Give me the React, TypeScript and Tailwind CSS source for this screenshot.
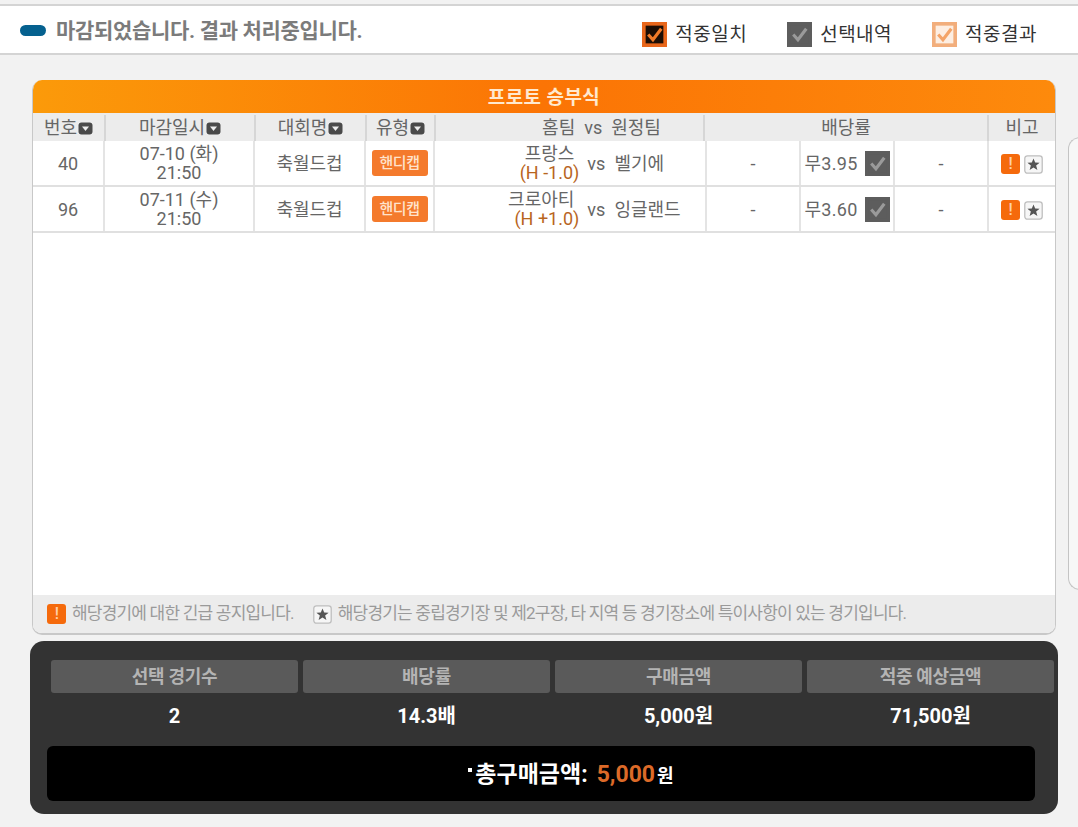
const font = { fontFamily: 'Roboto, "Noto Sans CJK KR", sans-serif' };

function Check({ stroke, fill, border, size = 25 }: { stroke: string; fill: string; border: string; size?: number }) {
  return (
    <svg width={size} height={size} viewBox="0 0 24 24" className="shrink-0">
      <rect x="0" y="0" width="24" height="24" fill={border} />
      <rect x="3.5" y="3.5" width="17" height="17" fill={fill} />
      <path d="M6 12 L10.5 17 L18.5 6.5" fill="none" stroke={stroke} strokeWidth="3" />
    </svg>
  );
}

function Sort() {
  return (
    <svg width="15" height="13" viewBox="0 0 15 13" className="shrink-0 ml-px">
      <rect x="0.5" y="0.5" width="14" height="12" rx="3" fill="#4a4a4a" />
      <path d="M4 4.5 H11 L7.5 9 Z" fill="#eeeeee" />
    </svg>
  );
}

function Bang({ size = 20 }: { size?: number }) {
  return (
    <span className="flex items-center justify-center rounded-[3px] bg-[#f56a0c] text-[#ffd0a8] font-medium text-[16px] leading-none shrink-0" style={{ width: size - 1, height: size }}>!</span>
  );
}

function Star({ size = 19 }: { size?: number }) {
  return (
    <svg width={size} height={size} viewBox="0 0 18 18" className="shrink-0">
      <rect x="0.75" y="0.75" width="16.5" height="16.5" rx="2.5" fill="#f6f6f6" stroke="#bdbdbd" strokeWidth="1.2" />
      <path d="M9 3.2 L10.6 7.1 L14.8 7.3 L11.5 10 L12.7 14.2 L9 11.9 L5.3 14.2 L6.5 10 L3.2 7.3 L7.4 7.1 Z" fill="#555555" />
    </svg>
  );
}

function Legend({ label, border, fill, stroke }: { label: string; border: string; fill: string; stroke: string }) {
  return (
    <div className="flex items-center gap-[8px]">
      <Check border={border} fill={fill} stroke={stroke} />
      <span className="text-[19px] text-[#333333] tracking-[0.5px] leading-none">{label}</span>
    </div>
  );
}

function HeadCell({ label, sort, last }: { label: string; sort?: boolean; last?: boolean }) {
  return (
    <div className={`flex items-center justify-center text-[18px] text-[#666666] leading-none ${last ? '' : 'border-r-2 border-[#d6d6d6]'}`}>
      <span>{label}</span>
      {sort && <Sort />}
    </div>
  );
}

function Row({ no, date, home, hc, away, odd }: { no: string; date: string; home: string; hc: string; away: string; odd: string }) {
  const cell = 'flex items-center justify-center border-r-2 border-[#e4e4e4] text-[#666666]';
  return (
    <div className="grid grid-cols-[72px_150px_111px_69px_272px_94px_94px_94px_66px] h-[46px] border-b-2 border-[#e0e0e0] bg-white text-[18px]">
      <div className={cell}>{no}</div>
      <div className={`${cell} flex-col leading-[19px]`}>
        <span>{date}</span>
        <span>21:50</span>
      </div>
      <div className={cell}>축월드컵</div>
      <div className={cell}>
        <span className="flex h-[26px] w-[56px] items-center justify-center rounded-[3px] bg-[#f47a2c] text-[15px] font-medium text-[#ffe3cc] tracking-[-0.5px]">핸디캡</span>
      </div>
      <div className={`${cell} pl-[2px]`}>
        <div className="w-[144px] flex flex-col items-end leading-[19px]">
          <span className="pr-[5px]">{home}</span>
          <span className="text-[#b8651e]">{hc}</span>
        </div>
        <span className="w-[127px] pl-[8px] flex items-center gap-[9px] whitespace-nowrap">
          <span>vs</span>
          <span>{away}</span>
        </span>
      </div>
      <div className={cell}>-</div>
      <div className={`${cell} gap-[7px]`}>
        <span className="tracking-[0.3px]">{odd}</span>
        <Check border="#5d5d5d" fill="#5d5d5d" stroke="#9a9a9a" />
      </div>
      <div className={cell}>-</div>
      <div className="flex items-center justify-center gap-[4px] pt-[2px]">
        <Bang />
        <Star />
      </div>
    </div>
  );
}

function Stat({ label, value }: { label: string; value: string }) {
  return (
    <div className="flex flex-col items-center">
      <div className="h-[33px] w-full rounded-[3px] bg-[#5a5a5a] flex items-center justify-center text-[18px] font-bold text-[#b4b4b4] tracking-[-0.3px]">{label}</div>
      <div className="h-[53px] flex items-center justify-center text-[20px] font-bold text-white pb-[8px]">{value}</div>
    </div>
  );
}

export default function App() {
  return (
    <div className="w-[1078px] h-[827px] overflow-hidden bg-[#f2f2f2] pt-[4px]" style={font}>
      <header className="h-[51px] bg-white border-y-2 border-y-[#d4d4d4] flex items-center pl-[20px] pr-[41px]">
        <span className="h-[11px] w-[26px] rounded-full bg-[#05618f] mt-[1px]" />
        <span className="ml-[10px] text-[21px] font-bold text-[#7b7b7b] tracking-[-0.32px] leading-none pt-[3px]">마감되었습니다. 결과 처리중입니다.</span>
        <div className="ml-auto flex items-center gap-[40px] pt-[9px]">
          <Legend label="적중일치" border="#e8661a" fill="#1c0d04" stroke="#f07a28" />
          <Legend label="선택내역" border="#5d5d5d" fill="#5d5d5d" stroke="#9a9a9a" />
          <Legend label="적중결과" border="#f2ae7c" fill="#fdeee2" stroke="#f4a468" />
        </div>
      </header>

      <main className="flex pl-[32px] pt-[25px] gap-[12px]">
        <section className="w-[1024px] h-[555px] shrink-0 rounded-[10px] border border-t-0 border-[#c8c8c8] border-b-2 bg-white overflow-hidden flex flex-col">
          <div className="h-[33px] bg-gradient-to-r from-[#fb9a0a] via-[#fb7405] to-[#fd8a0c] flex items-center justify-center text-[19px] font-bold text-[#ffe9cf] tracking-[0.4px] pt-[3px] shrink-0">프로토 승부식</div>
          <div className="grid grid-cols-[73px_150px_111px_69px_269px_284px_66px] h-[28px] bg-[#ececec] pt-[2px] shrink-0">
            <HeadCell label="번호" sort />
            <HeadCell label="마감일시" sort />
            <HeadCell label="대회명" sort />
            <HeadCell label="유형" sort />
            <div className="flex items-center justify-center gap-[9px] text-[18px] text-[#666666] leading-none border-r-2 border-[#d6d6d6] pl-[64px] whitespace-nowrap">
              <span>홈팀</span><span>vs</span><span>원정팀</span>
            </div>
            <HeadCell label="배당률" />
            <HeadCell label="비고" last />
          </div>
          <Row no="40" date="07-10 (화)" home="프랑스" hc="(H -1.0)" away="벨기에" odd="무3.95" />
          <Row no="96" date="07-11 (수)" home="크로아티" hc="(H +1.0)" away="잉글랜드" odd="무3.60" />
          <div className="flex-1" />
          <div className="h-[38px] bg-[#ececec] flex items-center pl-[14px] text-[17px] text-[#9a9a9a] tracking-[-0.8px] whitespace-nowrap shrink-0">
            <Bang />
            <span className="ml-[6px]">해당경기에 대한 긴급 공지입니다.</span>
            <span className="ml-[19px]"><Star /></span>
            <span className="ml-[6px]">해당경기는 중립경기장 및 제2구장, 타 지역 등 경기장소에 특이사항이 있는 경기입니다.</span>
          </div>
        </section>
        <div className="mt-[57px] h-[453px] w-[30px] shrink-0 rounded-l-[12px] border-y border-l border-[#c4c4c4] bg-[#f7f7f7]" />
      </main>

      <section className="ml-[30px] mt-[6px] w-[1028px] h-[173px] rounded-[14px] bg-[#333333] pt-[19px] pl-[21px] pr-[4px]">
        <div className="grid grid-cols-4 gap-[5px]">
          <Stat label="선택 경기수" value="2" />
          <Stat label="배당률" value="14.3배" />
          <Stat label="구매금액" value="5,000원" />
          <Stat label="적중 예상금액" value="71,500원" />
        </div>
        <div className="-ml-[4px] mr-[19px] h-[55px] rounded-[6px] bg-black flex items-center justify-center font-bold text-white text-[23px] pl-[60px] pt-[3px]">
          <span className="h-[4px] w-[4px] bg-white mb-[10px] mr-[3px]" />
          <span>총구매금액:</span>
          <span className="ml-[9px] text-[#dc6a28]">5,000</span>
          <span className="text-[18px] ml-[2px]">원</span>
        </div>
      </section>
    </div>
  );
}
